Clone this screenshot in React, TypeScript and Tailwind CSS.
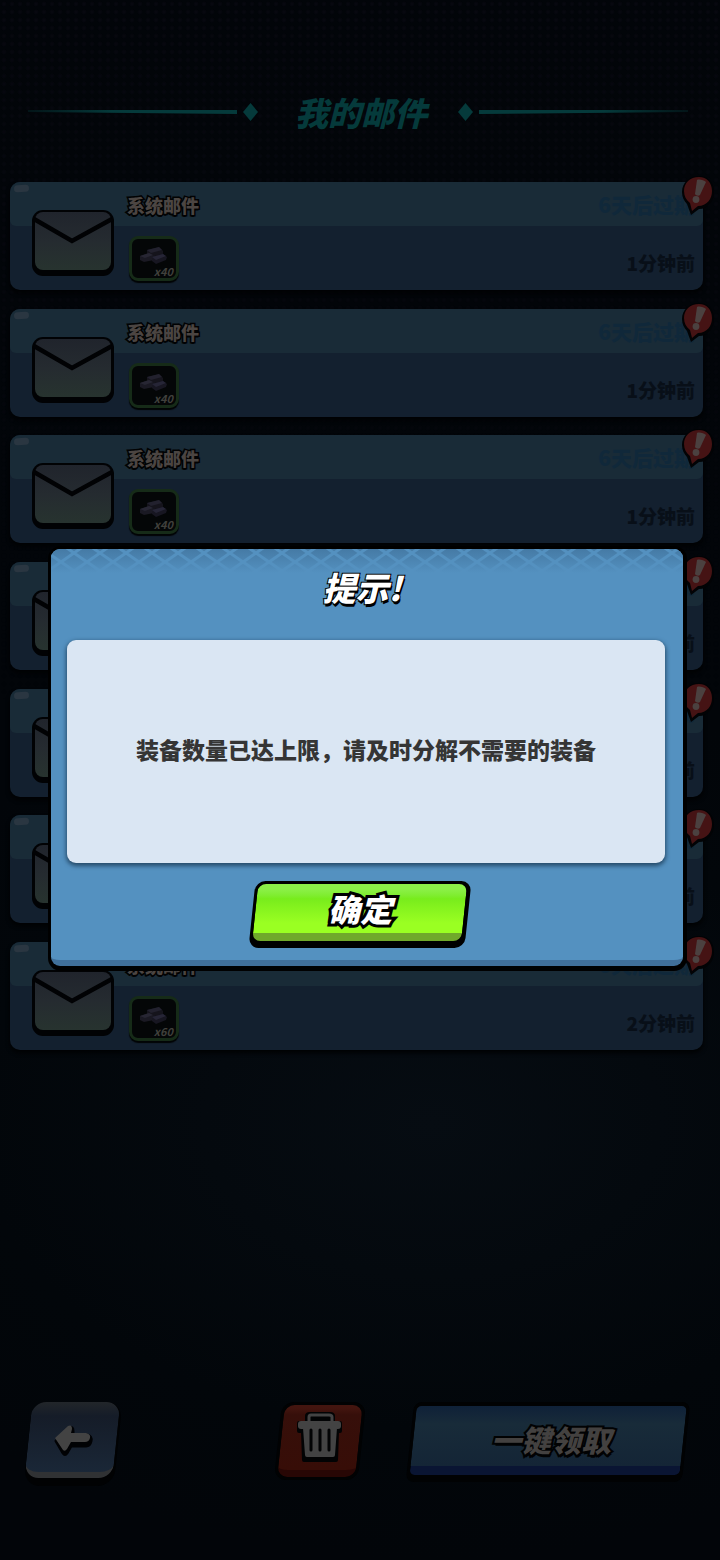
type Mail = { id: number; title: string; expires: string; age: string; count: number };

const mails: Mail[] = [
  { id: 1, title: "系统邮件", expires: "6天后过期", age: "1分钟前", count: 40 },
  { id: 2, title: "系统邮件", expires: "6天后过期", age: "1分钟前", count: 40 },
  { id: 3, title: "系统邮件", expires: "6天后过期", age: "1分钟前", count: 40 },
  { id: 4, title: "系统邮件", expires: "6天后过期", age: "1分钟前", count: 40 },
  { id: 5, title: "系统邮件", expires: "6天后过期", age: "1分钟前", count: 40 },
  { id: 6, title: "系统邮件", expires: "6天后过期", age: "1分钟前", count: 40 },
  { id: 7, title: "系统邮件", expires: "6天后过期", age: "2分钟前", count: 60 },
];

function Diamond() {
  return (
    <svg width="15" height="18" viewBox="0 0 15 18" aria-hidden="true">
      <path d="M7.5 0L15 9L7.5 18L0 9Z" fill="#053a3b" />
    </svg>
  );
}

function TaperedLine({ flip = false }: { flip?: boolean }) {
  const id = flip ? "line-right" : "line-left";
  return (
    <svg className="h-[6px] min-w-0 flex-1" viewBox="0 0 200 6" preserveAspectRatio="none" aria-hidden="true">
      <defs>
        <linearGradient id={id} x1={flip ? "1" : "0"} x2={flip ? "0" : "1"} y1="0" y2="0">
          <stop offset="0" stopColor="#053a3b" stopOpacity="0.3" />
          <stop offset="0.4" stopColor="#053a3b" />
        </linearGradient>
      </defs>
      <path d={flip ? "M0 1L200 1V3L0 5Z" : "M200 1L0 1V3L200 5Z"} fill={`url(#${id})`} />
    </svg>
  );
}

function Envelope() {
  return (
    <svg className="shrink-0" width="82" height="67" viewBox="0 0 82 67" aria-hidden="true">
      <defs>
        <linearGradient id="envelope" x1="0" x2="0" y1="0" y2="1">
          <stop offset="0" stopColor="#20242c" />
          <stop offset="0.5" stopColor="#252b30" />
          <stop offset="1" stopColor="#27332f" />
        </linearGradient>
      </defs>
      <rect x="0" y="0" width="82" height="66" rx="11" fill="#010204" />
      <rect x="3" y="2" width="76" height="58" rx="8" fill="url(#envelope)" />
      <path d="M2 9L40 31L80 9" fill="none" stroke="#010204" strokeWidth="4.5" />
    </svg>
  );
}

function Ingots() {
  return (
    <svg width="28" height="18" viewBox="0 0 28 18" aria-hidden="true">
      <path d="M8 3L20 0L24 4L24 8L12 11L8 8Z" fill="#15141c" />
      <path d="M8 3L20 0L23 3L12 6Z" fill="#22212e" />
      <path d="M1 9L10 6L15 9L15 13L5 15L1 13Z" fill="#1a1923" />
      <path d="M1 9L10 6L14 8L6 11Z" fill="#272633" />
      <path d="M13 10L24 7L28 10L27 13L17 17L13 14Z" fill="#171621" />
      <path d="M13 10L24 7L27 9L17 13Z" fill="#262536" />
    </svg>
  );
}

function AlertBadge() {
  return (
    <svg className="absolute -top-[7px] -right-[12px]" width="34" height="42" viewBox="0 0 34 42" aria-label="未读" role="img">
      <path d="M18 1C27 1 33 7 33 17C33 26 27 34 18 34L10 40L6 29C3 26 1 22 1 17C1 8 8 1 18 1Z" fill="#020305" />
      <path d="M18 2C26 2 31 8 31 16C31 24 26 31 17 31L11 36L9 28C5 25 3 21 3 16C3 8 9 2 18 2Z" fill="#451314" />
      <path d="M16 5C18 4 23 5 25 7L19 20C18 21 15 21 14 19Z" fill="#4b4140" />
      <circle cx="15" cy="24.5" r="3.4" fill="#4b4140" />
    </svg>
  );
}

function MailCard({ mail }: { mail: Mail }) {
  return (
    <li className="relative h-[108px] rounded-[10px] bg-[#13202f] shadow-[0_3px_4px_#010203]">
      <div className="h-[44px] rounded-[10px] rounded-b-[6px] bg-[#192b37]">
        <div className="absolute top-[3px] left-[4px] h-[7px] w-[15px] -rotate-3 rounded-full bg-[#2a3641]" />
      </div>
      <div className="absolute inset-0 flex items-start pr-[8px] pl-[22px]">
        <div className="pt-[28px]">
          <Envelope />
        </div>
        <div className="flex flex-col gap-[18px] pt-[10px] pl-[13px]">
          <h2 className="text-[18px] leading-[26px] font-black text-[#4b4542] [-webkit-text-stroke:3px_#010203] [paint-order:stroke_fill] [text-shadow:0_2px_0_#010203]">
            {mail.title}
          </h2>
          <div className="ml-[2px] flex h-[45px] w-[50px] flex-col items-end rounded-[9px] border-[3px] border-[#162b18] bg-[#040607] pr-[3px] shadow-[0_2px_1px_#020405]">
            <div className="mr-[6px] h-[25px] pt-[8px]">
              <Ingots />
            </div>
            <span className="text-[11px] leading-[14px] font-bold text-[#40403c] italic">x{mail.count}</span>
          </div>
        </div>
        <div className="ml-auto flex flex-col items-end gap-[30px] pt-[7px] whitespace-nowrap">
          <span className="text-[21px] leading-[30px] font-black text-[#10283a]">{mail.expires}</span>
          <span className="text-[19px] leading-[28px] font-black text-[#080f18]">{mail.age}</span>
        </div>
      </div>
      <AlertBadge />
    </li>
  );
}

function BackArrow() {
  return (
    <svg className="relative" width="42" height="34" viewBox="0 0 42 34" aria-hidden="true">
      <path d="M4 17L17 4Q21 2 21 7V11H35Q40 12 39 17Q38 22 34 22H19L15 29Q13 32 11 29Z" fill="#010204" stroke="#010204" strokeWidth="3" strokeLinejoin="round" />
      <path d="M3 14L16 2Q20 0 20 5L19 9H34Q39 10 38 14Q37 18 33 18H19L15 25Q13 28 11 26Z" fill="#434343" />
    </svg>
  );
}

function TrashCan() {
  return (
    <svg className="relative" width="46" height="52" viewBox="0 0 46 52" aria-hidden="true">
      <g fill="#020304" stroke="#020304" strokeWidth="4" strokeLinejoin="round">
        <path d="M2 12H10V5Q10 3 13 3H33Q36 3 36 5V12H43V20H40L39 49H7L6 20H2Z" />
      </g>
      <path d="M12 12V6Q12 4 14 4H32Q35 4 35 6V12" fill="none" stroke="#434343" strokeWidth="3" />
      <rect x="1" y="10" width="43" height="8" rx="3" fill="#434343" />
      <path d="M6 17H40L38 44Q38 46 36 46H10Q8 46 8 44Z" fill="#434343" />
      <path d="M14 19V39M23 19V39M32 19V39" stroke="#020304" strokeWidth="3" strokeLinecap="round" />
    </svg>
  );
}

function Lattice() {
  return (
    <svg className="absolute inset-x-0 top-0 h-[24px] w-full rounded-t-[9px]" aria-hidden="true">
      <defs>
        <pattern id="lattice" width="26" height="18" patternUnits="userSpaceOnUse" x="10" y="-5">
          <path d="M-2 -1.4L28 19.4M28 -1.4L-2 19.4" stroke="#5491c0" strokeWidth="3" />
        </pattern>
        <linearGradient id="lattice-shade" x1="0" x2="0" y1="0" y2="1">
          <stop offset="0" stopColor="#457aa5" />
          <stop offset="1" stopColor="#5491c0" />
        </linearGradient>
      </defs>
      <rect width="100%" height="24" fill="url(#lattice-shade)" />
      <rect width="100%" height="24" fill="url(#lattice)" />
    </svg>
  );
}

function NoticeDialog() {
  return (
    <div className="absolute inset-0 flex items-start pt-[546px] pr-[33px] pl-[48px]">
      <section
        role="alertdialog"
        aria-labelledby="notice-title"
        aria-describedby="notice-text"
        className="flex-1 rounded-[13px] border-[3px] border-b-[5px] border-black bg-black pr-[1px]"
      >
        <div className="relative flex flex-col items-center rounded-[9px] border-b-[6px] border-[#406f99] bg-[#5491c0] pr-[18px] pb-[12px] pl-[16px]">
          <Lattice />
          <h1
            id="notice-title"
            className="relative mr-[8px] pt-[16px] text-[33px] leading-[44px] font-black text-white italic [-webkit-text-stroke:2px_black] [paint-order:stroke_fill] [text-shadow:1px_3px_0_black]"
          >
            提示!
          </h1>
          <div className="mt-[31px] flex min-h-[223px] w-full items-center justify-center rounded-[9px] bg-[#dae6f3] pb-[6px] shadow-[0_2px_4px_1px_#264c6b]">
            <p id="notice-text" className="text-[23px] leading-[34px] font-black text-[#353535]">
              装备数量已达上限，请及时分解不需要的装备
            </p>
          </div>
          <button type="button" className="relative mt-[18px] mr-[12px] h-[67px] w-[216px]">
            <span className="absolute inset-0 -skew-x-6 rounded-[10px] bg-black pt-[3px] pr-[4px] pb-[7px] pl-[3px]">
              <span className="block h-full rounded-[8px] border-b-[8px] border-[#70a82b] bg-linear-to-b from-[#8cf048] from-10% via-[#78ec1c] via-30% to-[#9aff22] to-80%" />
            </span>
            <span className="relative block pb-[14px] text-[32px] leading-[44px] font-black text-white italic [-webkit-text-stroke:6px_black] [paint-order:stroke_fill] [text-shadow:0_2px_0_black]">
              确定
            </span>
          </button>
        </div>
      </section>
    </div>
  );
}

export default function App() {
  return (
    <div className="relative flex min-h-screen flex-col overflow-hidden bg-[#02060a] bg-[radial-gradient(ellipse_90%_28%_at_60%_72%,#060c12_0%,#02060a_70%,#020509_100%)] font-['Noto_Sans_CJK_SC','Noto_Sans',sans-serif]">
      <div className="absolute inset-x-0 top-0 h-[700px] bg-[radial-gradient(#07080f_1px,transparent_3px)] [mask-image:linear-gradient(black,transparent)] bg-[length:8px_8px]" />

      <header className="relative flex items-center gap-[6px] pt-[90px] pr-[32px] pl-[28px]">
        <TaperedLine />
        <Diamond />
        <h1 className="w-[188px] pl-[6px] text-center text-[33px] leading-[44px] font-black text-[#053a3b] italic">我的邮件</h1>
        <Diamond />
        <TaperedLine flip />
      </header>

      <ul className="relative mt-[48px] flex min-h-[868px] flex-col justify-between pr-[17px] pl-[10px]">
        {mails.map((mail) => (
          <MailCard key={mail.id} mail={mail} />
        ))}
      </ul>

      <footer className="relative mt-auto flex items-start pr-[34px] pb-[74px] pl-[28px]">
        <button type="button" aria-label="返回" className="relative flex h-[84px] w-[90px] justify-center pt-[22px]">
          <span className="absolute inset-0 -skew-x-6 rounded-[16px] bg-[#010203] pr-[2px] pb-[8px]">
            <span className="block h-full rounded-[14px] border-b-[6px] border-[#303234] bg-linear-to-b from-[#22262a] via-[#151c28] via-20% to-[#1a2737]" />
          </span>
          <BackArrow />
        </button>
        <div className="flex flex-1 justify-end pr-[48px]">
          <button type="button" aria-label="删除" className="relative flex h-[78px] w-[84px] justify-center pt-[9px]">
            <span className="absolute inset-0 -skew-x-6 rounded-[12px] bg-[#010203] p-[3px]">
              <span className="block h-full rounded-[10px] border-b-[7px] border-[#280705] bg-linear-to-b from-[#43150f] from-5% via-[#360f0a] via-15% to-[#370d07]" />
            </span>
            <TrashCan />
          </button>
        </div>
        <button type="button" className="relative h-[80px] w-[276px]">
          <span className="absolute inset-0 -skew-x-6 rounded-[8px] bg-[#010203] px-[3px] pt-[4px] pb-[7px]">
            <span className="block h-full rounded-[5px] border-b-[9px] border-[#0a1533] bg-linear-to-b from-[#0f2138] via-[#182b39] via-30% to-[#142536]" />
          </span>
          <span className="relative block pb-[6px] pl-[6px] text-[30px] leading-[44px] font-black text-[#434140] italic [-webkit-text-stroke:4px_#010203] [paint-order:stroke_fill] [text-shadow:1px_3px_0_#010203]">
            一键领取
          </span>
        </button>
      </footer>

      <NoticeDialog />
    </div>
  );
}
